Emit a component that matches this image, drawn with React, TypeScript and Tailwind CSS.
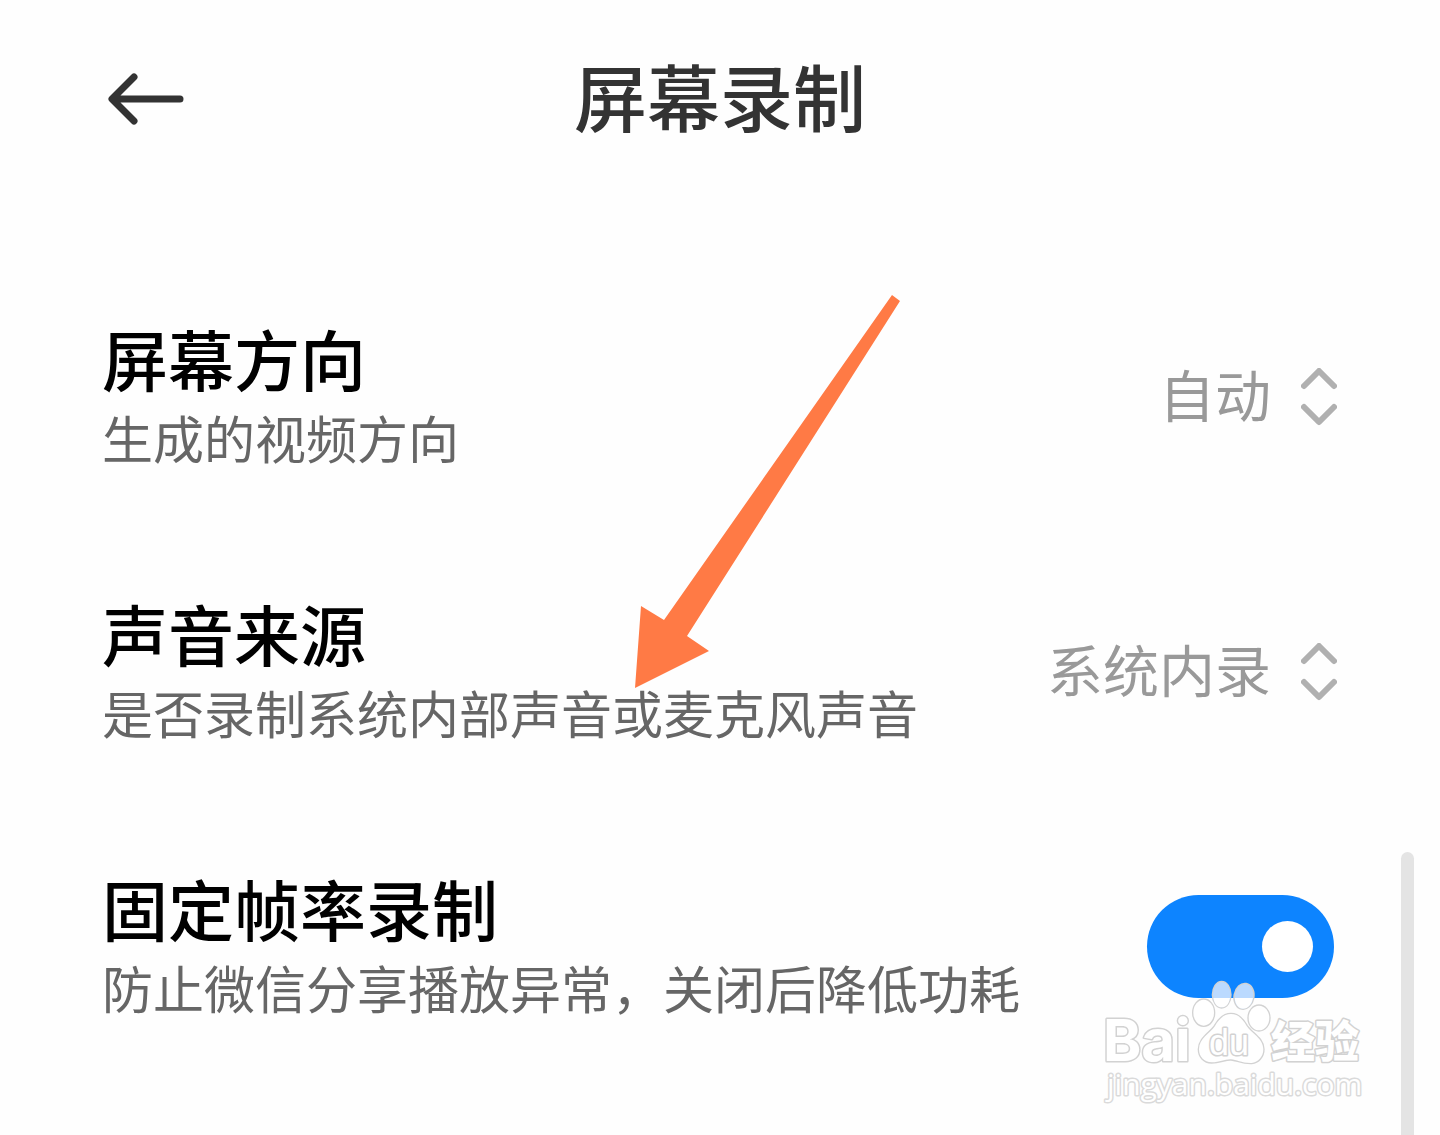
import { useState, type ReactNode } from 'react';

const Chevrons = () => (
  <svg viewBox="0 0 36 58" className="w-9 h-[58px] shrink-0" fill="none" stroke="#b0b0b0" strokeWidth="6" strokeLinecap="round" strokeLinejoin="round" aria-hidden="true">
    <path d="M3 18L18 3L33 18" />
    <path d="M3 39L18 54L33 39" />
  </svg>
);

type RowProps = {
  id: string;
  title: string;
  hint: string;
  children: ReactNode;
};

const SettingRow = ({ id, title, hint, children }: RowProps) => (
  <div className="flex items-center justify-between h-[275px]">
    <label htmlFor={id} className="flex flex-col">
      <span className="text-[66px] leading-[80px] font-medium text-black">{title}</span>
      <span className="text-[51px] leading-[80px] text-[#666666]">{hint}</span>
    </label>
    {children}
  </div>
);

type PickerProps = {
  id: string;
  options: string[];
};

const Picker = ({ id, options }: PickerProps) => {
  const [value, setValue] = useState(options[0]);
  return (
    <div className="flex items-center gap-[30px]">
      <select
        id={id}
        value={value}
        onChange={e => setValue(e.target.value)}
        className="appearance-none field-sizing-content bg-transparent pb-2 text-[56px] leading-[80px] text-[#999999] outline-none"
      >
        {options.map(option => <option key={option}>{option}</option>)}
      </select>
      <Chevrons />
    </div>
  );
};

const Pointer = () => (
  <svg viewBox="0 0 265 393" className="absolute left-[635px] top-[295px] w-[265px] h-[393px] pointer-events-none" aria-hidden="true">
    <path d="M257 0L265 6L52 341L74 356L0 393L6 311L29 325Z" fill="#ff7a45" />
  </svg>
);

const Watermark = () => (
  <svg
    viewBox="0 0 264 125"
    className="absolute right-[74px] bottom-[30px] w-[264px] h-[125px] pointer-events-none overflow-visible"
    fill="#ffffff"
    stroke="#d2d2d2"
    strokeWidth="3"
    strokeLinejoin="round"
    paintOrder="stroke"
  >
    <text x="1" y="81" fontSize="58" fontWeight="700" fontFamily="Inter, sans-serif">Bai</text>
    {/* paw */}
    <g transform="translate(-22 -140) scale(0.33333)" strokeWidth="8">
      <g fill="#bbdaff">
        <ellipse cx="425" cy="464" rx="26" ry="38" />
        <ellipse cx="492" cy="469" rx="28" ry="37" transform="rotate(10 492 469)" />
      </g>
      {/* toe tips that hang below the switch */}
      <g stroke="none">
        <path d="M400 474H450C447 492 438 502 425 502C412 502 403 492 400 474Z" />
        <path d="M464 474H519C515 494 504 506 489 506C475 506 466 494 464 474Z" />
      </g>
      <ellipse cx="371" cy="518" rx="31" ry="39" />
      <ellipse cx="537" cy="534" rx="31" ry="37" />
      <path d="M453 522C430 522 415 540 405 558C390 580 357 595 357 628C357 650 372 667 395 667C420 667 435 657 453 658C470 659 485 670 515 669C535 667 550 650 550 628C550 595 515 580 500 558C490 540 476 522 453 522Z" />
    </g>
    <text x="107" y="75" fontSize="36" fontFamily="Liberation Sans, sans-serif">du</text>
    <text x="169" y="78" fontSize="44" fontWeight="900" fontFamily="Noto Sans CJK SC, sans-serif">经验</text>
    <text x="5" y="115" fontSize="30" stroke="#dadada" fontFamily="Open Sans, sans-serif">jingyan.baidu.com</text>
  </svg>
);

export default function App() {
  const [fixedRate, setFixedRate] = useState(true);

  return (
    <div className="relative min-h-screen overflow-hidden bg-[#fefefe] font-['Noto_Sans_CJK_SC',sans-serif]" lang="zh-CN">
      <header className="grid grid-cols-[1fr_auto_1fr] items-center h-[198px] px-[104px]">
        <button type="button" aria-label="返回" className="justify-self-start px-1">
          <svg viewBox="0 0 76 52" className="w-[76px] h-[52px]" fill="none" stroke="#333333" strokeWidth="7" strokeLinecap="round" strokeLinejoin="round">
            <path d="M26 4L4 26L26 48M5 26H72" />
          </svg>
        </button>
        <h1 className="pb-2.5 text-[73px] leading-[100px] font-medium text-[#333333]">屏幕录制</h1>
      </header>

      <main className="pt-[61px] pl-[102px] pr-[103px]">
        <SettingRow id="orientation" title="屏幕方向" hint="生成的视频方向">
          <Picker id="orientation" options={['自动']} />
        </SettingRow>
        <SettingRow id="sound" title="声音来源" hint="是否录制系统内部声音或麦克风声音">
          <Picker id="sound" options={['系统内录']} />
        </SettingRow>
        <SettingRow id="frame-rate" title="固定帧率录制" hint="防止微信分享播放异常，关闭后降低功耗">
          <input
            id="frame-rate"
            type="checkbox"
            role="switch"
            checked={fixedRate}
            onChange={e => setFixedRate(e.target.checked)}
            className="appearance-none flex items-center shrink-0 w-[187px] h-[103px] mr-[3px] px-[21px] rounded-full bg-[#e5e5e5] checked:justify-end checked:bg-[#0d84ff] before:size-[51px] before:rounded-full before:bg-white"
          />
        </SettingRow>
      </main>

      {/* scroll thumb */}
      <div className="absolute right-[26px] top-[852px] -bottom-4 w-[13px] rounded-full bg-[#e4e4e4]" />
      <Pointer />
      <Watermark />
    </div>
  );
}
